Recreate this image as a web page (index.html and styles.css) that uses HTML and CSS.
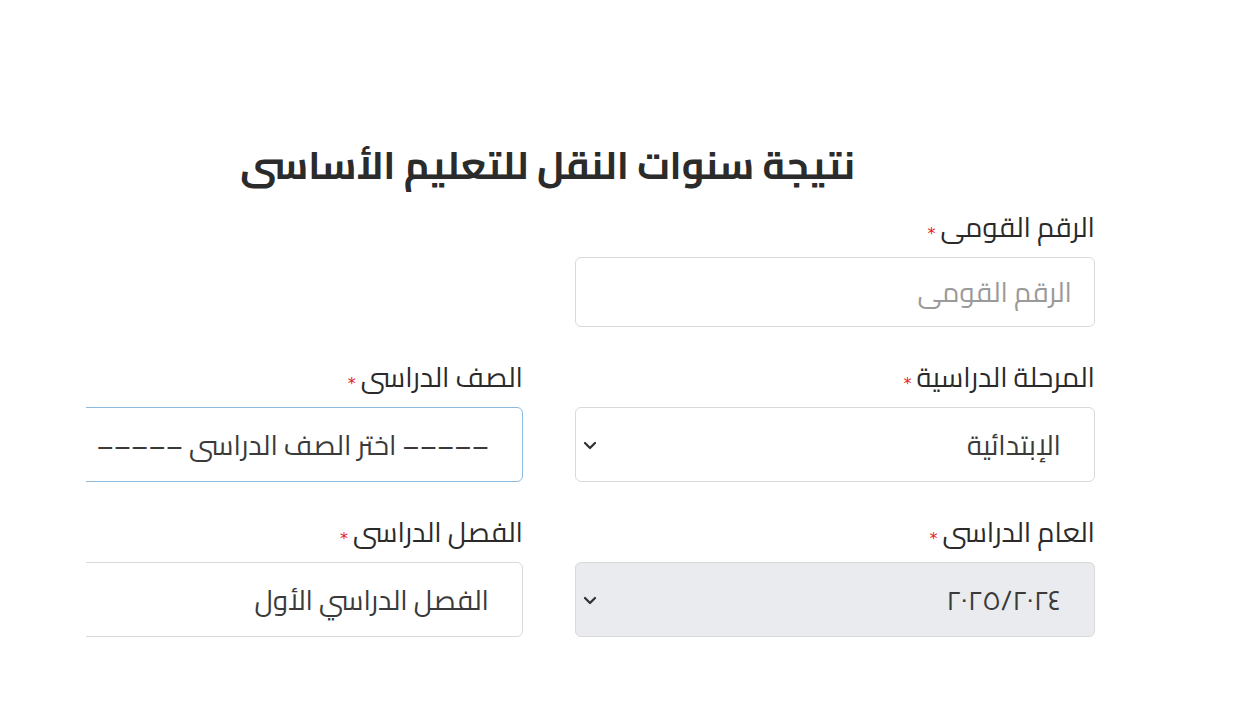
FILE: index.html
```html
<!DOCTYPE html>
<html lang="ar" dir="rtl">
<head>
<meta charset="utf-8">
<title>نتيجة سنوات النقل للتعليم الأساسى</title>
<link rel="stylesheet" href="styles.css">
</head>
<body>
<main class="page">
  <h1 class="title">نتيجة سنوات النقل للتعليم الأساسى</h1>
  <div class="form">
    <div class="field">
      <label class="label">الرقم القومى<span class="req">*</span></label>
      <div class="input placeholder">الرقم القومى</div>
    </div>
    <div class="field"></div>

    <div class="field">
      <label class="label">المرحلة الدراسية<span class="req">*</span></label>
      <div class="select">
        <span class="value">الإبتدائية</span>
        <svg class="chev" viewBox="0 0 14 9" width="14" height="9"><path d="M2 2 7 7 12 2" fill="none" stroke="#333" stroke-width="2.3" stroke-linecap="round" stroke-linejoin="round"/></svg>
      </div>
    </div>
    <div class="field">
      <label class="label">الصف الدراسى<span class="req">*</span></label>
      <div class="select focus">
        <span class="value">––––– اختر الصف الدراسى –––––</span>
      </div>
    </div>

    <div class="field">
      <label class="label">العام الدراسى<span class="req">*</span></label>
      <div class="select disabled">
        <span class="value">٢٠٢٥/٢٠٢٤</span>
        <svg class="chev" viewBox="0 0 14 9" width="14" height="9"><path d="M2 2 7 7 12 2" fill="none" stroke="#333" stroke-width="2.3" stroke-linecap="round" stroke-linejoin="round"/></svg>
      </div>
    </div>
    <div class="field">
      <label class="label">الفصل الدراسى<span class="req">*</span></label>
      <div class="select">
        <span class="value">الفصل الدراسي الأول</span>
      </div>
    </div>
  </div>
</main>
</body>
</html>
```
FILE: styles.css
```css
html, body {
  margin: 0;
  padding: 0;
  background: #fff;
}
body {
  font-family: "Cairo", "Noto Sans Arabic", "DejaVu Sans", sans-serif;
  color: #333;
  direction: rtl;
}
.page {
  width: 1009px;
  margin: 0 155px 0 0;
  overflow: hidden;
  padding-top: 136px;
}
.title {
  margin: 0 240px 0 0;
  font-size: 38.7px;
  line-height: 58px;
  font-weight: 700;
  color: #2b2b2b;
  text-align: right;
  white-space: nowrap;
}
.form {
  display: grid;
  grid-template-columns: 520px 520px;
  column-gap: 52px;
  row-gap: 30px;
  margin-top: 13px;
}
.field {
  display: flex;
  flex-direction: column;
}
.label {
  font-size: 27.5px;
  line-height: 40px;
  height: 40px;
  margin-bottom: 10px;
  color: #2a2a2a;
  white-space: nowrap;
}
.req {
  color: #e31b1b;
  font-family: "DejaVu Sans", sans-serif;
  font-size: 16px;
  margin-right: 5px;
  vertical-align: -2px;
}
.input {
  box-sizing: border-box;
  height: 70px;
  border: 1px solid #d9d9d9;
  border-radius: 6px;
  padding: 0 22px;
  display: flex;
  align-items: center;
  font-size: 27.5px;
}
.placeholder {
  color: #9a9a9a;
}
.select {
  box-sizing: border-box;
  height: 75px;
  border: 1px solid #d9d9d9;
  border-radius: 6px;
  padding: 0 33px 0 7px;
  display: flex;
  align-items: center;
  justify-content: space-between;
  font-size: 27.5px;
  color: #3a3a3a;
  background: #fff;
  white-space: nowrap;
}
.select.focus {
  border-color: #8dbbe0;
}
.select.disabled {
  background: #e9ebee;
}
.chev {
  display: block;
  margin-top: 2px;
}
```
